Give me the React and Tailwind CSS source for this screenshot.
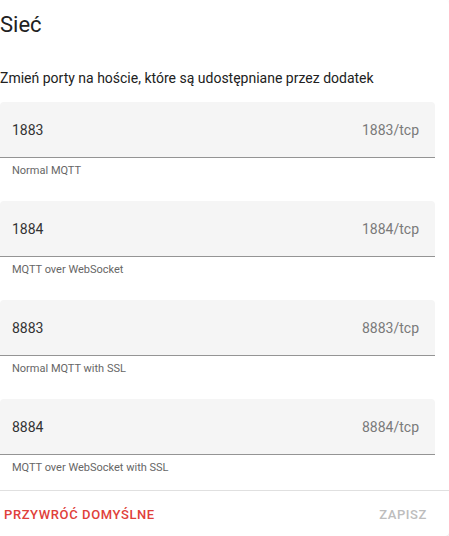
const ports = [
  { value: "1883", suffix: "1883/tcp", help: "Normal MQTT" },
  { value: "1884", suffix: "1884/tcp", help: "MQTT over WebSocket" },
  { value: "8883", suffix: "8883/tcp", help: "Normal MQTT with SSL" },
  { value: "8884", suffix: "8884/tcp", help: "MQTT over WebSocket with SSL" },
];

const PortField = ({ value, suffix, help }) => (
  <div>
    <div className="h-14 bg-[#f5f5f5] rounded-t-[4px] border-b border-[#949494] flex items-center justify-between pl-3 pr-4">
      <span className="text-sm text-[#333333]">{value}</span>
      <span className="text-sm text-[#7a7a7a]">{suffix}</span>
    </div>
    <div className="pl-3 mt-[5px] text-[11px] leading-4 text-[#666666]">{help}</div>
  </div>
);

export default function App() {
  return (
    <div
      className="w-[449px] h-[536px] overflow-hidden bg-white"
      style={{ fontFamily: "Roboto, 'Liberation Sans', sans-serif" }}
    >
      <div className="-ml-4 w-[465px] h-[536px] bg-white rounded-[4px] shadow-[0_1px_2px_rgba(0,0,0,0.12)] flex flex-col">
        {/* Header */}
        <div className="pl-4 pr-4 pt-[9px]">
          <h1 className="text-[22px] leading-8 text-[#212121] font-normal">Sieć</h1>
        </div>

        {/* Content */}
        <div className="pl-4 pr-[14px] pt-[27px]">
          <p className="text-sm leading-5 text-[#212121]">
            Zmień porty na hoście, które są udostępniane przez dodatek
          </p>
          <div className="mt-[14px] flex flex-col gap-[22px]">
            {ports.map((p) => (
              <PortField key={p.value} {...p} />
            ))}
          </div>
        </div>

        {/* Actions */}
        <div className="mt-[14px] border-t border-[#e0e0e0] flex-1 flex items-center justify-between pl-5 pr-[22px] pt-[2px]">
          <button className="text-[13px] font-medium tracking-[0.6px] text-[#e0403a] uppercase">
            Przywróć domyślne
          </button>
          <button className="text-[13px] font-medium tracking-[0.6px] text-[#bdbdbd] uppercase">
            Zapisz
          </button>
        </div>
      </div>
    </div>
  );
}
